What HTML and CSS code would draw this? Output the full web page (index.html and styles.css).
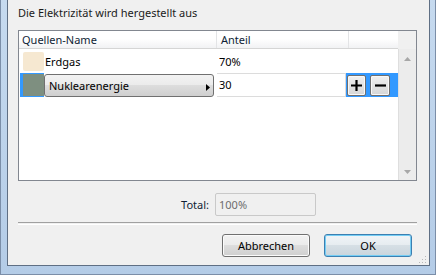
FILE: index.html
```html
<!DOCTYPE html>
<html lang="de">
<head>
    <meta charset="utf-8">
    <title>Elektrizität</title>
    <link rel="stylesheet" href="styles.css">
</head>
<body>
    <div class="window">
        <div class="client">
            <div class="title">Die Elektrizität wird hergestellt aus</div>

            <div class="table">
                <div class="view">
                    <div class="header">
                        <div class="hcell c1">Quellen-Name</div>
                        <div class="hcell c2">Anteil</div>
                        <div class="hcell c3"></div>
                    </div>

                    <div class="row">
                        <div class="cell c1">
                            <span class="swatch gas"></span>
                            <span class="name">Erdgas</span>
                        </div>
                        <div class="cell c2 value">70%</div>
                    </div>

                    <div class="row">
                        <div class="cell c1">
                            <span class="deco"><span class="swatch nuc"></span></span>
                            <div class="combo">
                                <span>Nuklearenergie</span>
                                <svg width="4" height="7" viewBox="0 0 4 7"><path d="M0 0 L4 3.5 L0 7 Z" fill="#000"/></svg>
                            </div>
                        </div>
                        <div class="editor">
                            <div class="edit">30</div>
                            <button class="tool plus">
                                <svg width="13" height="13" viewBox="0 0 13 13"><path d="M6.5 1 V12 M1 6.5 H12" stroke="#000" stroke-width="2.2"/></svg>
                            </button>
                            <button class="tool minus">
                                <svg width="13" height="13" viewBox="0 0 13 13"><path d="M1 6.5 H12" stroke="#000" stroke-width="2.2"/></svg>
                            </button>
                        </div>
                    </div>
                </div>

                <div class="scroll-col">
                    <div class="corner"></div>
                    <div class="scrollbar">
                        <svg width="7" height="4" viewBox="0 0 7 4"><path d="M0 4 L3.5 0 L7 4 Z" fill="#a7a7a7"/></svg>
                        <svg width="7" height="4" viewBox="0 0 7 4"><path d="M0 0 L7 0 L3.5 4 Z" fill="#a7a7a7"/></svg>
                    </div>
                </div>
            </div>

            <div class="total">
                <label class="total-label">Total:</label>
                <div class="total-field">100%</div>
            </div>

            <div class="sep"></div>

            <div class="buttons">
                <button class="btn">Abbrechen</button>
                <button class="btn default">OK</button>
            </div>

            <svg class="grip" width="10" height="10" viewBox="0 0 10 10">
                <rect x="8" y="2" width="1" height="1" fill="#b8b8b8"/>
                <rect x="5" y="5" width="1" height="1" fill="#b8b8b8"/>
                <rect x="8" y="5" width="1" height="1" fill="#b8b8b8"/>
                <rect x="2" y="8" width="1" height="1" fill="#b8b8b8"/>
                <rect x="5" y="8" width="1" height="1" fill="#b8b8b8"/>
                <rect x="8" y="8" width="1" height="1" fill="#b8b8b8"/>
            </svg>
        </div>
    </div>
</body>
</html>
```

FILE: styles.css
```css
body {
    margin: 0;
    font-family: 'Noto Sans', sans-serif;
    font-size: 11px;
    color: #000;
}

.window {
    width: 436px;
    height: 275px;
    box-sizing: border-box;
    display: flex;
    padding: 0 5px 8px 6px;
    background: linear-gradient(180deg, #c6daef, #b4cce7);
    border: 1px solid #7b8ea8;
    border-top: none;
}

.client {
    position: relative;
    flex: 1;
    display: flex;
    flex-direction: column;
    padding: 5px 12px 0 10px;
    background-color: #f0f0f0;
    border: 1px solid #5f6f84;
    border-top: none;
}

.title {
    line-height: 16px;
    height: 16px;
    margin-bottom: 9px;
    color: #1b1b1b;
}

.table {
    display: flex;
    height: 151px;
    box-sizing: border-box;
    border: 1px solid #828790;
    background-color: #fff;
}

.view {
    width: 379px;
    display: flex;
    flex-direction: column;
}

.header {
    display: flex;
    height: 18px;
    box-sizing: border-box;
    border-bottom: 1px solid #d5d5d5;
    background: linear-gradient(180deg, #ffffff 0%, #ffffff 45%, #f1f2f4 100%);
}

.hcell {
    line-height: 17px;
    padding-left: 3px;
    box-sizing: border-box;
    color: #0f1e35;
    border-right: 1px solid #e3e4e6;
}

.hcell.c2 {
    padding-left: 4px;
}

.c1 {
    width: 198px;
}

.c2 {
    width: 132px;
}

.c3 {
    flex: 1;
    border-right: none;
}

.row {
    display: flex;
    height: 24px;
    align-items: center;
}

.cell {
    display: flex;
    align-items: center;
    height: 100%;
    box-sizing: border-box;
}

.swatch {
    display: block;
    width: 21px;
    height: 19px;
    border-radius: 2px;
}

.gas {
    margin-left: 4px;
    background-color: #f6e8d1;
}

.name {
    margin-left: 1px;
}

.value {
    padding-left: 2px;
}

.deco {
    display: flex;
    margin-left: 1px;
    padding: 1px 0 1px 3px;
    background-color: #3399ff;
}

.nuc {
    height: 22px;
    border-radius: 0;
    background-color: #7e8f80;
}

.combo {
    display: flex;
    align-items: center;
    justify-content: space-between;
    width: 170px;
    height: 23px;
    box-sizing: border-box;
    padding: 0 3px 0 4px;
    border: 1px solid #707070;
    border-radius: 3px;
    background: linear-gradient(180deg, #f2f2f2 0%, #ebebeb 50%, #dddddd 50%, #cfcfcf 100%);
}

.combo svg {
    margin-top: 4px;
}

.editor {
    display: flex;
    align-items: center;
    flex: 1;
    height: 100%;
    background-color: #3399ff;
}

.edit {
    width: 129px;
    height: 100%;
    box-sizing: border-box;
    padding-left: 2px;
    line-height: 22px;
    background-color: #fff;
    border: 1px solid #dcdcdc;
    border-left: none;
}

.tool {
    display: flex;
    align-items: center;
    justify-content: center;
    padding: 0;
    height: 21px;
    box-sizing: border-box;
    border: 1px solid #6f6f6f;
    border-radius: 2px;
    box-shadow: inset 0 0 0 1px #f8f8f8;
    background: linear-gradient(180deg, #f0f0f0, #d6d6d6);
}

.plus {
    width: 19px;
    margin-left: 1px;
}

.minus {
    width: 20px;
    margin-left: 4px;
}

.scroll-col {
    width: 18px;
    display: flex;
    flex-direction: column;
    background-color: #f0f0f0;
}

.corner {
    height: 18px;
}

.scrollbar {
    flex: 1;
    display: flex;
    flex-direction: column;
    align-items: center;
    justify-content: space-between;
    padding: 8px 0 6px 0;
    border-left: 1px solid #dedede;
    background-color: #ececec;
}

.total {
    display: flex;
    align-items: center;
    margin-top: 12px;
    height: 23px;
}

.total-label {
    width: 191px;
    text-align: right;
    margin-right: 6px;
    color: #0f1e35;
}

.total-field {
    width: 101px;
    height: 23px;
    box-sizing: border-box;
    padding-left: 3px;
    line-height: 21px;
    color: #6d6d6d;
    border: 1px solid #c9c9c9;
    border-radius: 2px;
    background-color: #f0f0f0;
}

.sep {
    margin-top: 6px;
    height: 1px;
    border-top: 1px solid #a0a0a0;
    border-bottom: 1px solid #fff;
}

.buttons {
    display: flex;
    justify-content: flex-end;
    gap: 14px;
    margin-top: 9px;
    padding-right: 5px;
}

.btn {
    width: 88px;
    height: 23px;
    padding: 0;
    font-family: 'Noto Sans', sans-serif;
    font-size: 11px;
    color: #000;
    border: 1px solid #707070;
    border-radius: 3px;
    box-shadow: inset 0 0 0 1px #fbfbfb;
    background: linear-gradient(180deg, #f2f2f2 0%, #ebebeb 50%, #dddddd 50%, #cfcfcf 100%);
}

.btn.default {
    border-color: #3c7fb1;
    box-shadow: inset 0 0 0 1px #74cdf4;
    background: linear-gradient(180deg, #f0f4f7 0%, #e6ecf0 50%, #d6dfe5 50%, #c9d4dc 100%);
}

.grip {
    position: absolute;
    right: 2px;
    bottom: 1px;
}
```
